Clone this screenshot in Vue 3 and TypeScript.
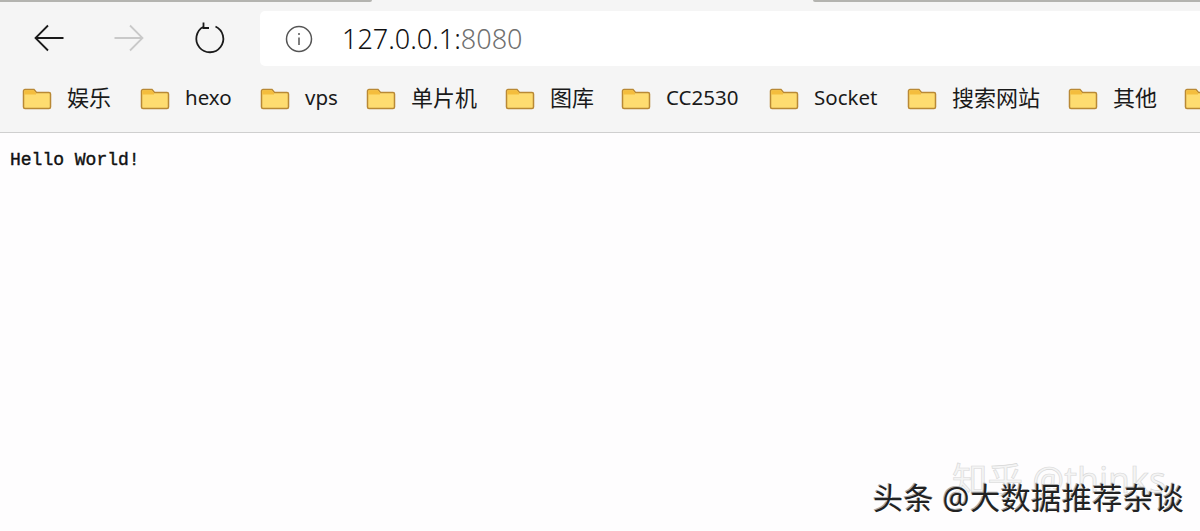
<template>
  <div class="page">
    <div class="tab-strip">
      <div class="tab-edge left"></div>
      <div class="tab-edge right"></div>
    </div>

    <header class="chrome">
      <div class="nav-row">
        <div class="nav-buttons">
          <svg class="nav-icon" width="30" height="28" viewBox="0 0 30 28">
            <path d="M29.500 14H1.500M14 1.500 1.500 14 14 26.500" class="stroke-dark" />
          </svg>
          <svg class="nav-icon" width="30" height="28" viewBox="0 0 30 28">
            <path d="M.5 14h28M16 1.500 28.500 14 16 26.500" class="stroke-faint" />
          </svg>
          <svg class="nav-icon" width="32" height="32" viewBox="0 0 32 32">
            <path d="M21.500 4.500A13.500 13.500 0 1 1 9.500 4.800M9.500 0.500v5.500H15" class="stroke-dark" />
          </svg>
        </div>

        <div class="address-bar">
          <svg width="28" height="28" viewBox="0 0 28 28">
            <circle cx="14" cy="14" r="12.500" class="stroke-info" />
            <path d="M14 12.500v7.500M14 8v2" class="stroke-info" />
          </svg>
          <span class="url">127.0.0.1:<span class="url-port">8080</span></span>
        </div>
      </div>

      <div class="bookmarks">
        <div
          v-for="item in bookmarks"
          :key="item.label"
          class="bookmark"
          :style="{ width: item.width + 'px' }"
        >
          <svg class="folder" width="30" height="22" viewBox="0 0 30 22">
            <path d="M1.500 3a1.500 1.500 0 0 1 1.500-1.500h9l2.500 3h12.500a1.500 1.500 0 0 1 1.500 1.500v13a1.500 1.500 0 0 1-1.500 1.500H3A1.500 1.500 0 0 1 1.500 19Z" fill="#fedc70" stroke="#b98935" stroke-width="1.500" />
            <path d="M2.300 6.500V3.200a1 1 0 0 1 1-1h8.400l2.300 2.800v1.500Z" fill="#f4bd3d" />
          </svg>
          <span class="bookmark-label" :class="{ latin: item.latin }">{{ item.label }}</span>
        </div>
      </div>
    </header>

    <main class="content">
      <p class="hello">Hello World!</p>
    </main>

    <div class="mark-back">知乎 @thinks</div>
    <div class="mark-front">头条 @大数据推荐杂谈</div>
  </div>
</template>

<script setup lang="ts">
const bookmarks = [
  { label: '娱乐', width: 118 },
  { label: 'hexo', width: 120, latin: true },
  { label: 'vps', width: 106, latin: true },
  { label: '单片机', width: 139 },
  { label: '图库', width: 116 },
  { label: 'CC2530', width: 148, latin: true },
  { label: 'Socket', width: 138, latin: true },
  { label: '搜索网站', width: 161 },
  { label: '其他', width: 116 },
  { label: '', width: 40 }
]
</script>

<style>
html,
body {
  margin: 0;
  background: #fefdfe;
  overflow: hidden;
}
</style>

<style scoped>
.page {
  position: relative;
  width: 1200px;
  height: 531px;
  overflow: hidden;
  background: #fefdfe;
  font-family: "Noto Sans", "Noto Sans CJK SC", sans-serif;
}

.tab-strip {
  display: flex;
  justify-content: space-between;
  height: 3px;
  background: #f5f5f5;
}

.tab-edge {
  height: 2px;
  background: #b4b4b0;
}

.tab-edge.left {
  width: 372px;
  border-bottom-right-radius: 2px;
}

.tab-edge.right {
  width: 387px;
  border-bottom-left-radius: 2px;
}

.chrome {
  height: 129px;
  background: #f5f5f5;
  border-bottom: 1px solid #cfcfcf;
}

.nav-row {
  display: flex;
  align-items: flex-start;
  height: 73px;
  padding-top: 8px;
  box-sizing: border-box;
}

.nav-buttons {
  display: flex;
  align-items: center;
  gap: 50px;
  width: 260px;
  height: 54px;
  padding-left: 34px;
  box-sizing: border-box;
}

.nav-icon {
  flex: none;
}

.stroke-dark,
.stroke-faint,
.stroke-info {
  fill: none;
  stroke-width: 1.800;
}

.stroke-dark {
  stroke: #1a1a1a;
}

.stroke-faint {
  stroke: #c9c9c9;
}

.stroke-info {
  stroke: #555;
  stroke-width: 1.500;
}

.address-bar {
  flex: 1;
  display: flex;
  align-items: center;
  gap: 29px;
  height: 55px;
  padding-left: 25px;
  background: #fff;
  border-radius: 5px 0 0 5px;
}

.url {
  font-size: 27px;
  font-weight: 300;
  color: #111;
  line-height: 55px;
}

.url-port {
  color: #6f6f6f;
}

.bookmarks {
  display: flex;
  align-items: center;
  height: 50px;
  padding-left: 22px;
}

.bookmark {
  flex: none;
  display: flex;
  align-items: center;
  gap: 15px;
}

.folder {
  flex: none;
  margin-bottom: 4px;
}

.bookmark-label {
  padding-bottom: 8px;
  font-size: 22px;
  line-height: 30px;
  color: #1a1a1a;
  white-space: nowrap;
}

.bookmark-label.latin {
  font-size: 20.500px;
}

.content {
  padding: 17px 10px;
}

.hello {
  margin: 0;
  font-family: "Liberation Mono", monospace;
  font-size: 18px;
  line-height: 20px;
  color: #111;
  -webkit-text-stroke: 0.4px #111;
}

.mark-back {
  position: absolute;
  left: 952px;
  top: 458px;
  font-size: 35.500px;
  line-height: 42px;
  white-space: nowrap;
  color: #f4f4f4;
  -webkit-text-stroke: 0.6px #d8d8d8;
}

.mark-front {
  position: absolute;
  left: 873px;
  top: 478px;
  font-size: 30px;
  letter-spacing: 0.600px;
  line-height: 40px;
  white-space: nowrap;
  color: #222;
  text-shadow: 1px 1px 0 #fff, -1px -1px 0 #aaa;
}
</style>
